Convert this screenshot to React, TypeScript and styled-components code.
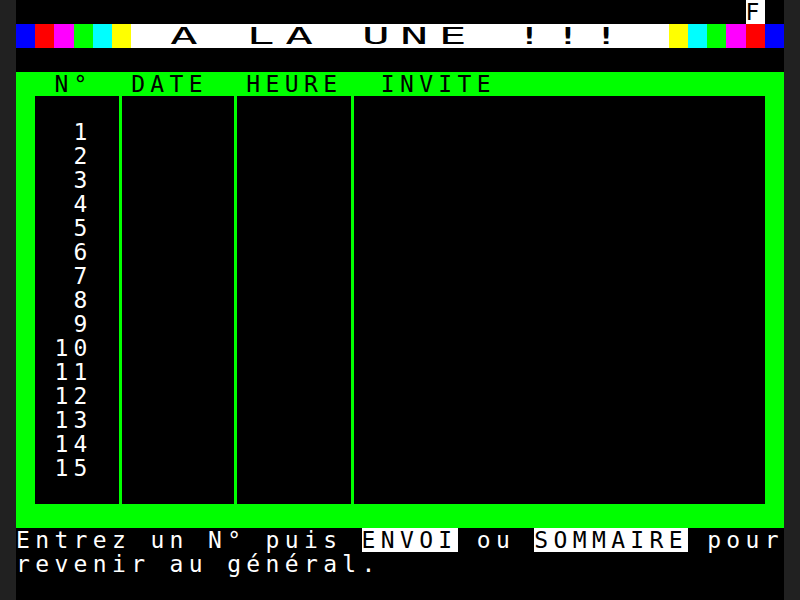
import React from "react";
import styled, { createGlobalStyle } from "styled-components";

const CELL_W = 19.2;
const GREEN = "#00ff00";

const GlobalStyle = createGlobalStyle`
  html, body { margin: 0; padding: 0; background: #212121; }
  body { overflow: hidden; }
`;

const Screen = styled.div`
  width: 768px;
  height: 600px;
  margin: 0 auto;
  background: #000;
  display: flex;
  flex-direction: column;
  font-family: "DejaVu Sans Mono", "Liberation Mono", monospace;
  font-size: 23px;
  letter-spacing: 5.35px;
  line-height: 24px;
  color: #fff;
  white-space: pre;
  overflow: hidden;
`;

const Line = styled.div<{ $indent?: number }>`
  height: 24px;
  flex: none;
  padding-left: ${(p) => (p.$indent ?? 0) * CELL_W}px;
`;

const Inverse = styled.span`
  display: inline-block;
  height: 24px;
  vertical-align: top;
  background: #fff;
  color: #000;
`;

const Band = styled.div`
  display: flex;
  height: 24px;
  flex: none;
`;

const Swatch = styled.div<{ $c: string }>`
  width: ${CELL_W}px;
  flex: none;
  background: ${(p) => p.$c};
`;

const TitleBand = styled.div`
  flex: 1;
  background: #fff;
  color: #000;
  padding-left: ${CELL_W * 2}px;
`;

const DoubleWidth = styled.span`
  display: inline-block;
  transform: scaleX(2);
  transform-origin: 0 0;
`;

const Frame = styled.div`
  flex: none;
  background: ${GREEN};
  padding: 0 ${CELL_W}px 24px;
`;

const FrameHeader = styled.div`
  height: 24px;
  color: #000;
`;

const Table = styled.div`
  height: 408px;
  background: #000;
  display: grid;
  grid-template-columns: 84px 3px 112px 3px 114px 3px 1fr;
`;

const Column = styled.div`
  padding-top: 24px;
`;

const Rule = styled.div`
  background: ${GREEN};
`;

const NumberCell = styled.div`
  height: 24px;
`;

const leftColors = ["#0000ff", "#ff0000", "#ff00ff", "#00ff00", "#00ffff", "#ffff00"];
const rightColors = ["#ffff00", "#00ffff", "#00ff00", "#ff00ff", "#ff0000", "#0000ff"];

export default function App() {
  const numbers = Array.from({ length: 15 }, (_, i) => String(i + 1).padStart(3, " "));
  return (
    <>
      <GlobalStyle />
      <Screen>
        <Line $indent={38}>
          <Inverse>F</Inverse>
        </Line>
        <Band>
          {leftColors.map((c, i) => (
            <Swatch key={`l${i}`} $c={c} />
          ))}
          <TitleBand>
            <DoubleWidth>A LA UNE !!!</DoubleWidth>
          </TitleBand>
          {rightColors.map((c, i) => (
            <Swatch key={`r${i}`} $c={c} />
          ))}
        </Band>
        <Line />
        <Frame>
          <FrameHeader>{" N°  DATE  HEURE  INVITE"}</FrameHeader>
          <Table>
            <Column>
              {numbers.map((n) => (
                <NumberCell key={n}>{n}</NumberCell>
              ))}
            </Column>
            <Rule />
            <Column />
            <Rule />
            <Column />
            <Rule />
            <Column />
          </Table>
        </Frame>
        <Line>
          {"Entrez un N° puis "}
          <Inverse>ENVOI</Inverse>
          {" ou "}
          <Inverse>SOMMAIRE</Inverse>
          {" pour"}
        </Line>
        <Line>revenir au général.</Line>
        <Line />
      </Screen>
    </>
  );
}
